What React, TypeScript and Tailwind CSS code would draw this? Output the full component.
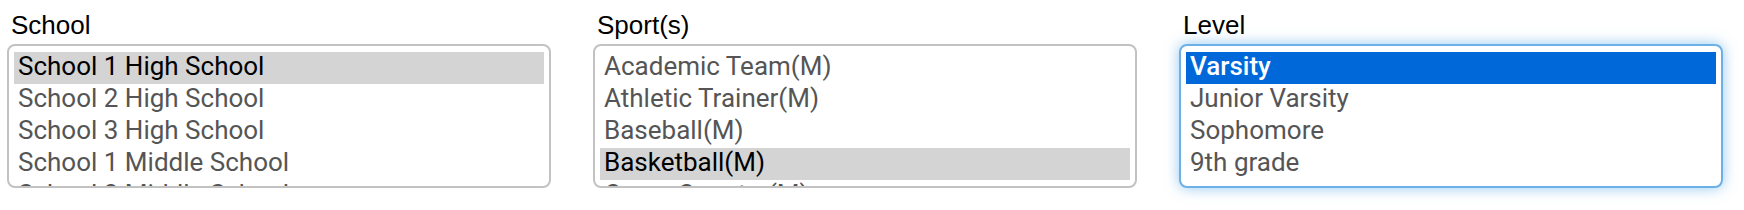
/**
 * Roster filters — three multi-select list boxes (School, Sport(s), Level).
 * Rendered as plain listbox divs so the row highlight can be drawn exactly;
 * the Level box is shown in its focused state.
 */
import { useState } from "react";

interface ListFieldProps {
  label: string;
  options: string[];
  selected: number;
  focused?: boolean;
}

const SCHOOLS = [
  "School 1 High School",
  "School 2 High School",
  "School 3 High School",
  "School 1 Middle School",
  "School 2 Middle School",
  "School 3 Middle School",
];

const SPORTS = [
  "Academic Team(M)",
  "Athletic Trainer(M)",
  "Baseball(M)",
  "Basketball(M)",
  "Cross Country(M)",
  "Football(M)",
];

const LEVELS = ["Varsity", "Junior Varsity", "Sophomore", "9th grade"];

function ListField({ label, options, selected, focused = false }: ListFieldProps) {
  const [active, setActive] = useState(selected);

  return (
    <div className="flex w-[544px] flex-col">
      <label className="mb-[6px] pl-[4px] font-['Liberation_Sans',Arial,sans-serif] text-[26px] leading-none text-black">
        {label}
      </label>
      <div
        role="listbox"
        aria-label={label}
        aria-multiselectable="true"
        className={
          focused
            ? "h-[144px] overflow-hidden rounded-[8px] border-2 border-[#6cb0e8] bg-white px-[5px] pt-[6px] shadow-[0_0_14px_rgba(102,175,233,0.7)]"
            : "h-[144px] overflow-hidden rounded-[8px] border-2 border-[#c2c2c2] bg-white px-[5px] pt-[6px]"
        }
      >
        {options.map((opt, i) => {
          const isSel = i === active;
          let tone = "text-[#555555]";
          if (isSel) tone = focused ? "bg-[#0068d9] font-medium text-white" : "bg-[#d4d4d4] text-black";
          return (
            <div
              key={opt}
              role="option"
              aria-selected={isSel}
              onClick={() => setActive(i)}
              className={`h-[32px] whitespace-nowrap px-[4px] font-['Roboto',Arial,sans-serif] text-[26px] leading-[28px] ${tone}`}
            >
              {opt}
            </div>
          );
        })}
      </div>
    </div>
  );
}

export default function App() {
  return (
    <div className="h-[210px] w-[1744px] bg-white">
      <div className="flex gap-[42px] pl-[7px] pt-[12px]">
        <ListField label="School" options={SCHOOLS} selected={0} />
        <ListField label="Sport(s)" options={SPORTS} selected={3} />
        <ListField label="Level" options={LEVELS} selected={0} focused />
      </div>
    </div>
  );
}
